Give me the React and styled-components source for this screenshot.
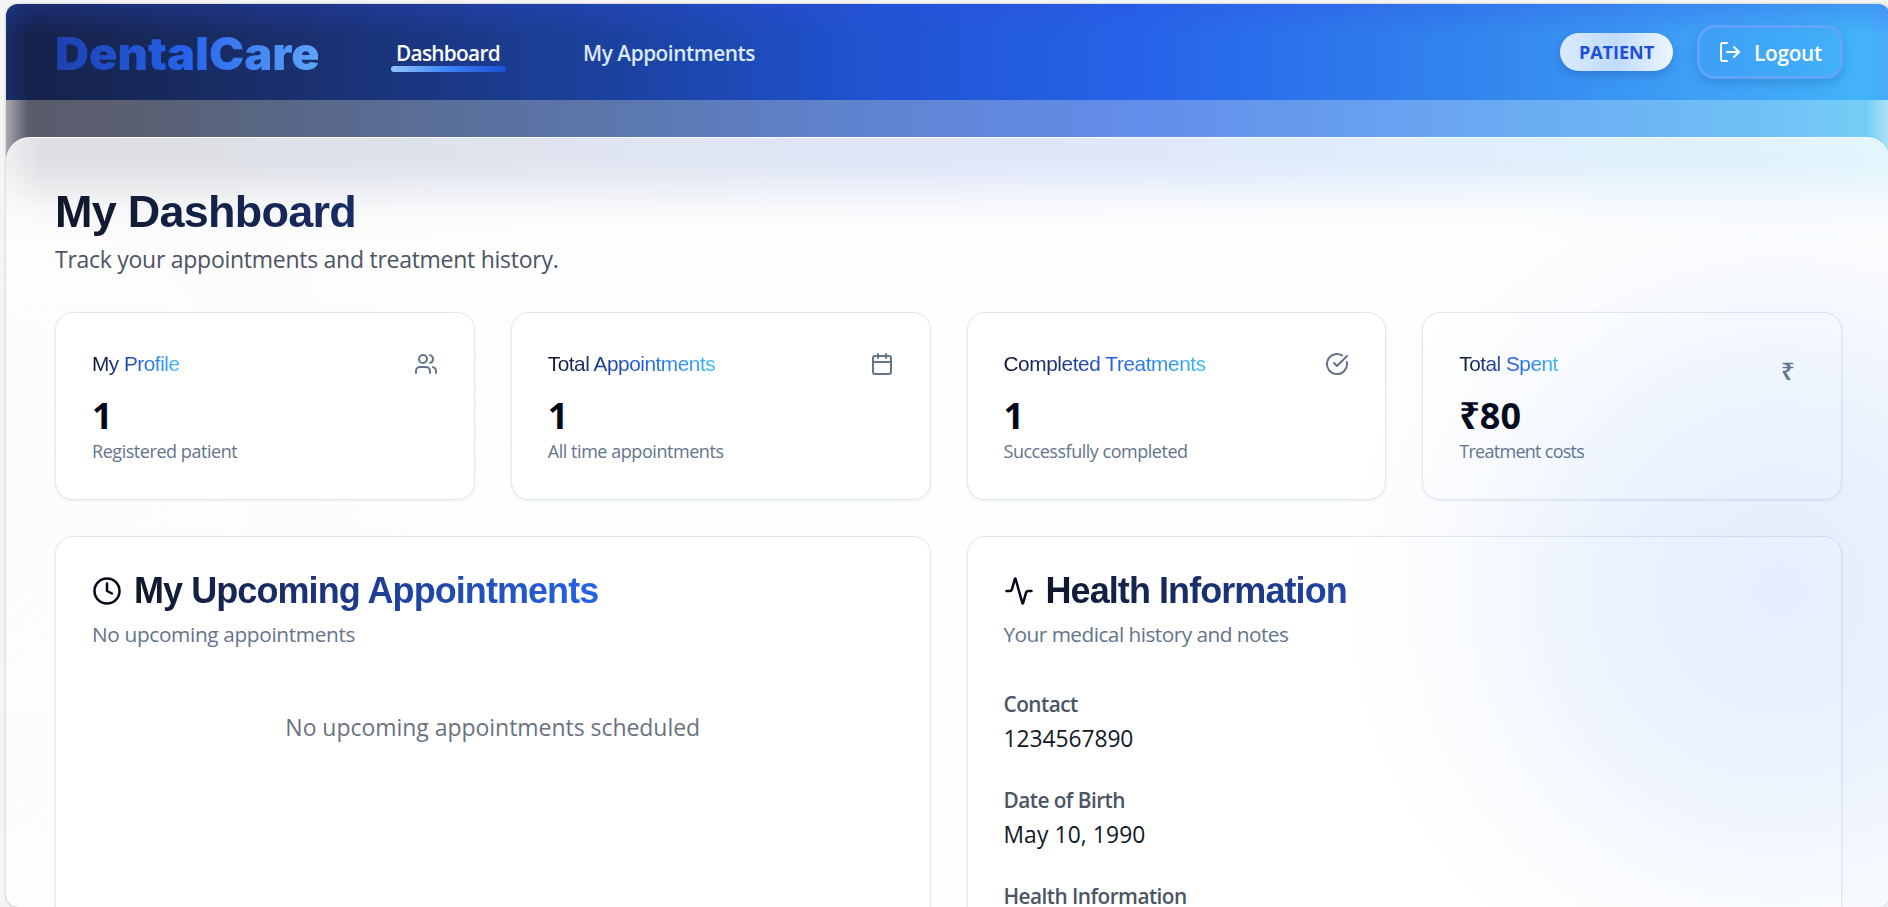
import React from "react";
import styled, { createGlobalStyle } from "styled-components";
import { Activity, Calendar, CircleCheckBig, Clock, LogOut, Users } from "lucide-react";

const sans = `"Open Sans", "Noto Sans", sans-serif`;
const arial = `"Liberation Sans", Arial, sans-serif`;

const GlobalStyle = createGlobalStyle`
  *, *::before, *::after { box-sizing: border-box; }
  html, body { margin: 0; height: 100%; overflow: hidden; }
  body { background: #f5f5f5; font-family: ${sans}; color: #020817; }
  h1, h2, h3, p, dl, dt, dd { margin: 0; }
`;

const Page = styled.div`
  height: 907px;
  padding: 4px 0 0 6px;
  overflow: hidden;
`;

const Frame = styled.div`
  width: 1884px;
  height: 903px;
  display: flex;
  flex-direction: column;
  overflow: hidden;
  border-radius: 12px;
  background: #fefefe;
  box-shadow: 0 0 2px 1px rgba(0, 0, 0, 0.12);
`;

const Header = styled.header`
  flex: none;
  height: 96px;
  display: flex;
  align-items: center;
  padding: 0 47px 0 49px;
  background:
    linear-gradient(to bottom, rgba(50, 75, 225, 0.25), rgba(50, 75, 225, 0) 30px),
    linear-gradient(to right, rgba(37, 80, 190, 0.25), rgba(37, 80, 190, 0) 24px),
    linear-gradient(to left, rgba(90, 150, 250, 0.35), rgba(90, 150, 250, 0) 26px),
    linear-gradient(to right, #15214b 0, #16244f 60px, #1a3070 300px, #1c43a3 630px, #2052cf 850px, #2663e9 1134px, #3285ee 1470px, #3ea0f6 1700px, #42b3fa 1860px);
`;

const Logo = styled.div`
  width: 252px;
  margin-right: 84px;
  padding-top: 3px;
  font: 900 45px/54px Inter, "Arial Black", sans-serif;
  white-space: nowrap;
  transform: scaleX(1.045);
  transform-origin: left center;
  color: transparent;
  background: linear-gradient(to right, #1e40af, #2563eb 50%, #60a5fa);
  background-clip: text;
`;

const Nav = styled.nav`
  display: flex;
  gap: 72px;
  padding-top: 2px;
`;

const NavLink = styled.a`
  position: relative;
  padding: 0 6px 0 5px;
  font-size: 20.8px;
  line-height: 28px;
  font-weight: 600;
  letter-spacing: ${({ $track }) => $track}px;
  color: ${({ $active }) => ($active ? "#ffffff" : "#dbeafe")};

  &::after {
    content: "";
    display: ${({ $active }) => ($active ? "block" : "none")};
    position: absolute;
    left: 0;
    right: 0;
    top: 27px;
    height: 6px;
    border-radius: 3px;
    background: linear-gradient(to right, #93c5fd, #3b82f6 50%, #1d4ed8);
  }
`;

const Account = styled.div`
  display: flex;
  align-items: center;
  gap: 24px;
  margin-left: auto;
`;

const Role = styled.span`
  width: 113px;
  height: 38px;
  border-radius: 19px;
  text-align: center;
  font-size: 18px;
  line-height: 38px;
  font-weight: 700;
  color: #1d4ed8;
  background: linear-gradient(to right, #dbeafe, #bfdbfe 50%, #eff6ff);
  box-shadow: 0 4px 8px rgba(15, 40, 110, 0.22);
`;

const LogoutButton = styled.button`
  display: flex;
  align-items: center;
  gap: 12px;
  width: 146px;
  height: 54px;
  padding: 0 0 0 18px;
  border: 3px solid #60a5fa;
  border-radius: 18px;
  background: transparent;
  color: #ffffff;
  font: 600 20.8px/28px ${sans};
  letter-spacing: -0.28px;
  box-shadow: 0 5px 8px rgba(15, 60, 130, 0.2);

  span { padding-top: 2px; }
`;

const Body = styled.div`
  flex: 1;
  padding-top: 37px;
  background:
    linear-gradient(to right, rgba(255, 245, 250, 0.5), rgba(255, 245, 250, 0) 22px),
    linear-gradient(to left, rgba(225, 245, 253, 0.55), rgba(225, 245, 253, 0) 24px),
    linear-gradient(to right, #585b6a 0, #5a5e6e 100px, #586889 300px, #5c78b0 630px, #5f83cf 850px, #628dea 1134px, #6aa8f1 1470px, #6fc0f6 1750px, #74cdf6 1860px);
`;

const Panel = styled.main`
  position: relative;
  height: 100%;
  overflow: hidden;
  padding: 47px 48px 0 49px;
  border-top: 1px solid rgba(255, 255, 255, 0.4);
  border-radius: 24px 24px 0 0;
  background:
    radial-gradient(circle 560px at 0 330px, rgba(253, 251, 253, 0.9), rgba(253, 251, 253, 0)),
    #fefefe;

  &::before {
    content: "";
    position: absolute;
    inset: 0 0 auto 0;
    height: 110px;
    background:
      linear-gradient(to right, rgba(255, 255, 255, 0.5), rgba(255, 255, 255, 0) 36px),
      linear-gradient(to right, #dedfe3 0, #dddfe3 150px, #dee2ec 400px, #dfe5f2 700px, #e0e6f9 1000px, #dfebfb 1300px, #e0f0fb 1600px, #e3f5fd 1884px);
    mask-image: linear-gradient(to bottom, #000 0, #000 22px, rgba(0, 0, 0, 0.85) 36px, rgba(0, 0, 0, 0.55) 52px, rgba(0, 0, 0, 0.22) 68px, rgba(0, 0, 0, 0.06) 86px, transparent 108px);
  }

  &::after {
    content: "";
    position: absolute;
    inset: 0;
    pointer-events: none;
    background: radial-gradient(
      circle 460px at 1774px 453px,
      rgba(59, 130, 246, 0.125) 0,
      rgba(59, 130, 246, 0.115) 100px,
      rgba(59, 130, 246, 0.095) 190px,
      rgba(59, 130, 246, 0.055) 270px,
      rgba(59, 130, 246, 0.022) 350px,
      rgba(59, 130, 246, 0) 450px
    );
  }
`;

const Intro = styled.div`
  position: relative;
  margin-bottom: 37px;
`;

const PageTitle = styled.h1`
  margin-bottom: 4px;
  font: 700 45px/54px ${arial};
  letter-spacing: -0.75px;
  color: transparent;
  background: linear-gradient(to right, #0f172a, #1e3a8a 480px);
  background-clip: text;
`;

const PageLead = styled.p`
  font-size: 23px;
  line-height: 32px;
  letter-spacing: -0.27px;
  color: #4b5563;
`;

const StatGrid = styled.section`
  display: grid;
  grid-template-columns: repeat(4, 1fr);
  gap: 36px;
  margin-bottom: 36px;
`;

const DetailGrid = styled.section`
  display: grid;
  grid-template-columns: repeat(2, 1fr);
  gap: 36px;
`;

const Card = styled.article`
  position: relative;
  height: ${({ $tall }) => ($tall ? "440px" : "188px")};
  padding: 36px;
  border: 1px solid #e2e8f0;
  border-radius: 18px;
  background: #ffffff;
  box-shadow: 0 1px 3px rgba(15, 23, 42, 0.07);
`;

const StatHead = styled.header`
  display: flex;
  align-items: center;
  justify-content: space-between;
  height: 30px;
  margin-bottom: 15px;
  color: #64748b;
`;

const StatTitle = styled.h3`
  font: 400 20.8px/30px ${arial};
  letter-spacing: ${({ $track }) => $track}px;
  color: transparent;
  background: linear-gradient(to right, #0f172a, #1e3a8a 30%, #2563eb 58%, #38bdf8);
  background-clip: text;
`;

const RupeeMark = styled.span`
  width: 24px;
  height: 30px;
  font-size: 24px;
  line-height: 44px;
  font-weight: 600;
`;

const StatValue = styled.p`
  font-size: 36px;
  line-height: 44px;
  font-weight: 700;
`;

const StatNote = styled.p`
  font-size: 18px;
  line-height: 26px;
  letter-spacing: ${({ $track }) => $track}px;
  color: #64748b;
`;

const SectionHead = styled.header`
  display: flex;
  align-items: center;
  gap: 12px;
  height: 36px;
  margin-bottom: 11px;
`;

const SectionTitle = styled.h2`
  font: 700 36px/44px ${arial};
  letter-spacing: -0.93px;
  color: transparent;
  background: linear-gradient(to right, #0f172a, #1e3a8a 220px, #2563eb 465px);
  background-clip: text;
`;

const SectionNote = styled.p`
  font-size: 20.8px;
  line-height: 28px;
  letter-spacing: ${({ $track }) => $track}px;
  color: #64748b;
`;

const EmptyState = styled.p`
  margin-top: 62px;
  text-align: center;
  font-size: 23px;
  line-height: 34px;
  letter-spacing: -0.04px;
  color: #6b7280;
`;

const Facts = styled.dl`
  display: grid;
  gap: 30px;
  margin-top: 42px;
`;

const FactLabel = styled.dt`
  margin-bottom: 4px;
  font-size: 20.8px;
  line-height: 28px;
  font-weight: 600;
  letter-spacing: -0.54px;
  color: #4b5563;
`;

const FactValue = styled.dd`
  font-size: 22.8px;
  line-height: 34px;
  letter-spacing: ${({ $track }) => $track}px;
  color: #111827;
`;

const stats = [
  { title: "My Profile", value: "1", note: "Registered patient", icon: <Users size={24} />, titleTrack: -0.5, noteTrack: -0.45 },
  { title: "Total Appointments", value: "1", note: "All time appointments", icon: <Calendar size={24} />, titleTrack: -0.46, noteTrack: -0.45 },
  { title: "Completed Treatments", value: "1", note: "Successfully completed", icon: <CircleCheckBig size={24} />, titleTrack: -0.41, noteTrack: -0.48 },
  { title: "Total Spent", value: "₹80", note: "Treatment costs", icon: <RupeeMark>₹</RupeeMark>, titleTrack: -0.5, noteTrack: -0.72 },
];

const facts = [
  { label: "Contact", value: "1234567890", track: -0.05 },
  { label: "Date of Birth", value: "May 10, 1990", track: 0.12 },
  { label: "Health Information", value: "", track: 0 },
];

export default function App() {
  return (
    <Page>
      <GlobalStyle />
      <Frame>
        <Header>
          <Logo>DentalCare</Logo>
          <Nav>
            <NavLink $active $track={-0.7}>Dashboard</NavLink>
            <NavLink $track={-0.45}>My Appointments</NavLink>
          </Nav>
          <Account>
            <Role>PATIENT</Role>
            <LogoutButton>
              <LogOut size={24} />
              <span>Logout</span>
            </LogoutButton>
          </Account>
        </Header>
        <Body>
          <Panel>
            <Intro>
              <PageTitle>My Dashboard</PageTitle>
              <PageLead>Track your appointments and treatment history.</PageLead>
            </Intro>
            <StatGrid>
              {stats.map((s) => (
                <Card key={s.title}>
                  <StatHead>
                    <StatTitle $track={s.titleTrack}>{s.title}</StatTitle>
                    {s.icon}
                  </StatHead>
                  <StatValue>{s.value}</StatValue>
                  <StatNote $track={s.noteTrack}>{s.note}</StatNote>
                </Card>
              ))}
            </StatGrid>
            <DetailGrid>
              <Card $tall>
                <SectionHead>
                  <Clock size={30} />
                  <SectionTitle>My Upcoming Appointments</SectionTitle>
                </SectionHead>
                <SectionNote $track={-0.35}>No upcoming appointments</SectionNote>
                <EmptyState>No upcoming appointments scheduled</EmptyState>
              </Card>
              <Card $tall>
                <SectionHead>
                  <Activity size={30} />
                  <SectionTitle>Health Information</SectionTitle>
                </SectionHead>
                <SectionNote $track={-0.53}>Your medical history and notes</SectionNote>
                <Facts>
                  {facts.map((f) => (
                    <div key={f.label}>
                      <FactLabel>{f.label}</FactLabel>
                      <FactValue $track={f.track}>{f.value}</FactValue>
                    </div>
                  ))}
                </Facts>
              </Card>
            </DetailGrid>
          </Panel>
        </Body>
      </Frame>
    </Page>
  );
}
